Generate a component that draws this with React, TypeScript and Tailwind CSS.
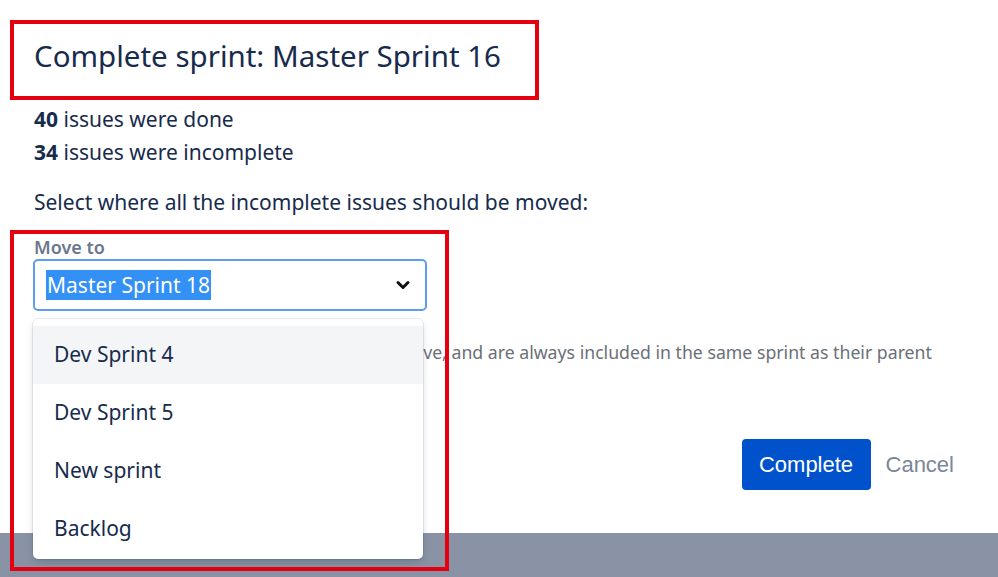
const sans = "font-['Noto_Sans','Open_Sans',sans-serif]";

const options = ["Dev Sprint 4", "Dev Sprint 5", "New sprint", "Backlog"];

export default function App() {
  return (
    <div className={`relative w-[998px] h-[577px] overflow-hidden bg-white flex flex-col text-[#172b4d] ${sans}`}>
      {/* Dialog body */}
      <div className="flex-1 flex flex-col px-[34px]">
        <h1 className="mt-[30px] h-[52px] text-[29.5px] leading-[52px] font-normal whitespace-nowrap">
          Complete sprint: Master Sprint 16
        </h1>

        <div className="mt-[21px] text-[21px] leading-[33px]">
          <p>
            <b className="font-bold">40</b> issues were done
          </p>
          <p>
            <b className="font-bold">34</b> issues were incomplete
          </p>
        </div>

        <p className="mt-[17px] text-[21px] leading-[33px]">
          Select where all the incomplete issues should be moved:
        </p>

        <label className="mt-[17px] text-[18px] leading-[22px] font-semibold text-[#6b778c]">Move to</label>

        {/* Select + open menu */}
        <div className="relative mt-px w-[393px]">
          <div className="h-[52px] flex items-center justify-between border-2 border-[#5e9ded] rounded-[5px] pl-[11px] pr-[12px] -ml-px">
            <span className="bg-[#3390f5] text-white text-[21px] leading-[30px] px-px">Master Sprint 18</span>
            <svg width="20" height="20" viewBox="0 0 24 24" fill="none" stroke="#111" strokeWidth="3.6" strokeLinecap="round" strokeLinejoin="round">
              <path d="M6 9l6 6 6-6" />
            </svg>
          </div>

          <ul className="absolute z-10 top-[60px] -left-px w-[390px] bg-white rounded-[5px] pt-[7px] pb-px shadow-[0_0_0_1px_rgba(9,30,66,0.08),0_4px_8px_-2px_rgba(9,30,66,0.25)]">
            {options.map((o, i) => (
              <li
                key={o}
                className={`h-[58px] flex items-center pl-[21px] text-[21px] ${i === 0 ? "bg-[#f4f5f7]" : ""}`}
              >
                {o}
              </li>
            ))}
          </ul>
        </div>

        <p className="mt-[27px] ml-[20px] text-[17.7px] leading-[28px] text-[#6b6f78] whitespace-nowrap">
          Sub-tasks are not included in the total(s) above, and are always included in the same sprint as their parent
        </p>

        <div className="mt-[73px] flex justify-end items-center gap-[15px] pr-[10px] font-['Liberation_Sans',Arial,sans-serif]">
          <button className="h-[51px] w-[129px] rounded-[4px] bg-[#0052cc] text-white text-[22px]">Complete</button>
          <button className="text-[22px] text-[#7a869a]">Cancel</button>
        </div>
      </div>

      {/* Backdrop strip */}
      <div className="h-[44px] bg-[#8993a5]" />

      {/* Annotation boxes */}
      <div className="absolute left-[10px] top-[20px] w-[529px] h-[80px] border-4 border-[#e5000f] pointer-events-none" />
      <div className="absolute left-[10px] top-[230px] w-[439px] h-[341px] border-4 border-[#e5000f] pointer-events-none z-20" />
    </div>
  );
}
